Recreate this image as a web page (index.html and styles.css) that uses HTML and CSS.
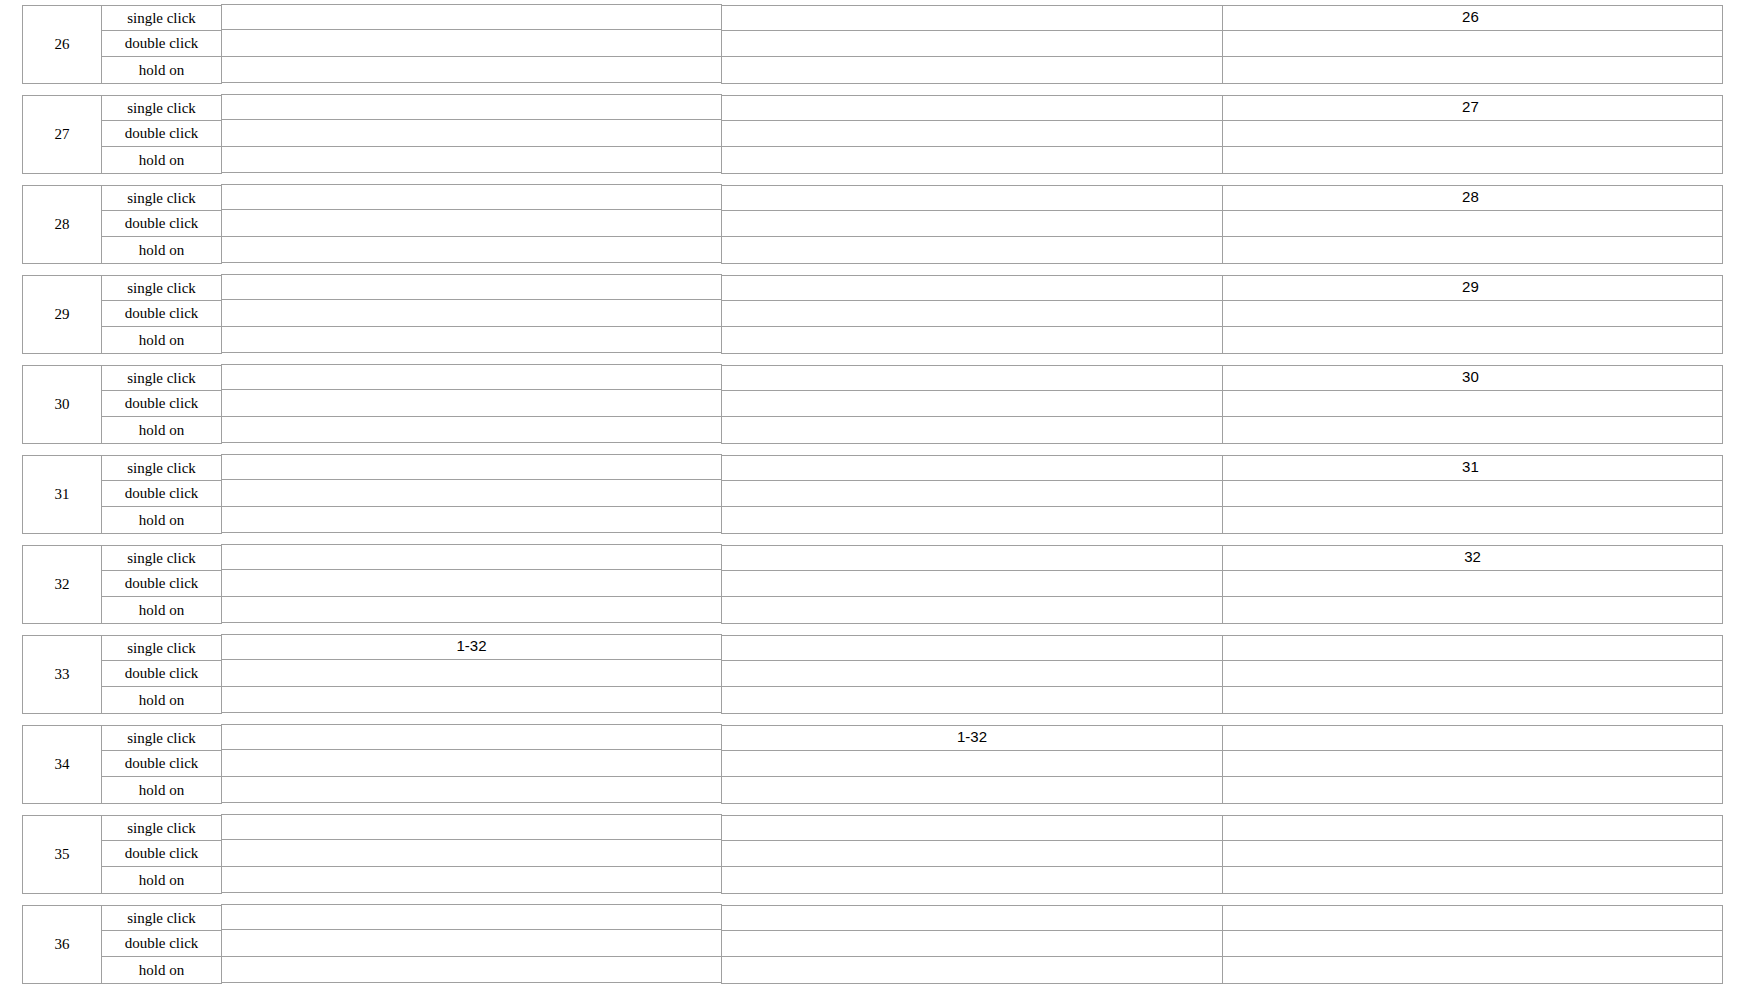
FILE: index.html
```html
<!doctype html>
<html>

<head>
    <title>Button mapping</title>
    <link rel="stylesheet" href="styles.css">
</head>

<body>
    <div class="Sheet">
        <div class="Block">
            <div class="Keys">
                <div class="Num">26</div>
                <div class="Act">single click</div>
                <div class="Act">double click</div>
                <div class="Act">hold on</div>
            </div>
            <div class="Vals Vals-first"><div class="Cell"></div><div class="Cell"></div><div class="Cell"></div></div>
            <div class="Vals Vals-mid"><div class="Cell"></div><div class="Cell"></div><div class="Cell"></div></div>
            <div class="Vals"><div class="Cell">26&nbsp;</div><div class="Cell"></div><div class="Cell"></div></div>
        </div>
        <div class="Block">
            <div class="Keys">
                <div class="Num">27</div>
                <div class="Act">single click</div>
                <div class="Act">double click</div>
                <div class="Act">hold on</div>
            </div>
            <div class="Vals Vals-first"><div class="Cell"></div><div class="Cell"></div><div class="Cell"></div></div>
            <div class="Vals Vals-mid"><div class="Cell"></div><div class="Cell"></div><div class="Cell"></div></div>
            <div class="Vals"><div class="Cell">27&nbsp;</div><div class="Cell"></div><div class="Cell"></div></div>
        </div>
        <div class="Block">
            <div class="Keys">
                <div class="Num">28</div>
                <div class="Act">single click</div>
                <div class="Act">double click</div>
                <div class="Act">hold on</div>
            </div>
            <div class="Vals Vals-first"><div class="Cell"></div><div class="Cell"></div><div class="Cell"></div></div>
            <div class="Vals Vals-mid"><div class="Cell"></div><div class="Cell"></div><div class="Cell"></div></div>
            <div class="Vals"><div class="Cell">28&nbsp;</div><div class="Cell"></div><div class="Cell"></div></div>
        </div>
        <div class="Block">
            <div class="Keys">
                <div class="Num">29</div>
                <div class="Act">single click</div>
                <div class="Act">double click</div>
                <div class="Act">hold on</div>
            </div>
            <div class="Vals Vals-first"><div class="Cell"></div><div class="Cell"></div><div class="Cell"></div></div>
            <div class="Vals Vals-mid"><div class="Cell"></div><div class="Cell"></div><div class="Cell"></div></div>
            <div class="Vals"><div class="Cell">29&nbsp;</div><div class="Cell"></div><div class="Cell"></div></div>
        </div>
        <div class="Block">
            <div class="Keys">
                <div class="Num">30</div>
                <div class="Act">single click</div>
                <div class="Act">double click</div>
                <div class="Act">hold on</div>
            </div>
            <div class="Vals Vals-first"><div class="Cell"></div><div class="Cell"></div><div class="Cell"></div></div>
            <div class="Vals Vals-mid"><div class="Cell"></div><div class="Cell"></div><div class="Cell"></div></div>
            <div class="Vals"><div class="Cell">30&nbsp;</div><div class="Cell"></div><div class="Cell"></div></div>
        </div>
        <div class="Block">
            <div class="Keys">
                <div class="Num">31</div>
                <div class="Act">single click</div>
                <div class="Act">double click</div>
                <div class="Act">hold on</div>
            </div>
            <div class="Vals Vals-first"><div class="Cell"></div><div class="Cell"></div><div class="Cell"></div></div>
            <div class="Vals Vals-mid"><div class="Cell"></div><div class="Cell"></div><div class="Cell"></div></div>
            <div class="Vals"><div class="Cell">31&nbsp;</div><div class="Cell"></div><div class="Cell"></div></div>
        </div>
        <div class="Block">
            <div class="Keys">
                <div class="Num">32</div>
                <div class="Act">single click</div>
                <div class="Act">double click</div>
                <div class="Act">hold on</div>
            </div>
            <div class="Vals Vals-first"><div class="Cell"></div><div class="Cell"></div><div class="Cell"></div></div>
            <div class="Vals Vals-mid"><div class="Cell"></div><div class="Cell"></div><div class="Cell"></div></div>
            <div class="Vals"><div class="Cell">32</div><div class="Cell"></div><div class="Cell"></div></div>
        </div>
        <div class="Block">
            <div class="Keys">
                <div class="Num">33</div>
                <div class="Act">single click</div>
                <div class="Act">double click</div>
                <div class="Act">hold on</div>
            </div>
            <div class="Vals Vals-first"><div class="Cell">1-32</div><div class="Cell"></div><div class="Cell"></div></div>
            <div class="Vals Vals-mid"><div class="Cell"></div><div class="Cell"></div><div class="Cell"></div></div>
            <div class="Vals"><div class="Cell"></div><div class="Cell"></div><div class="Cell"></div></div>
        </div>
        <div class="Block">
            <div class="Keys">
                <div class="Num">34</div>
                <div class="Act">single click</div>
                <div class="Act">double click</div>
                <div class="Act">hold on</div>
            </div>
            <div class="Vals Vals-first"><div class="Cell"></div><div class="Cell"></div><div class="Cell"></div></div>
            <div class="Vals Vals-mid"><div class="Cell">1-32</div><div class="Cell"></div><div class="Cell"></div></div>
            <div class="Vals"><div class="Cell"></div><div class="Cell"></div><div class="Cell"></div></div>
        </div>
        <div class="Block">
            <div class="Keys">
                <div class="Num">35</div>
                <div class="Act">single click</div>
                <div class="Act">double click</div>
                <div class="Act">hold on</div>
            </div>
            <div class="Vals Vals-first"><div class="Cell"></div><div class="Cell"></div><div class="Cell"></div></div>
            <div class="Vals Vals-mid"><div class="Cell"></div><div class="Cell"></div><div class="Cell"></div></div>
            <div class="Vals"><div class="Cell"></div><div class="Cell"></div><div class="Cell"></div></div>
        </div>
        <div class="Block">
            <div class="Keys">
                <div class="Num">36</div>
                <div class="Act">single click</div>
                <div class="Act">double click</div>
                <div class="Act">hold on</div>
            </div>
            <div class="Vals Vals-first"><div class="Cell"></div><div class="Cell"></div><div class="Cell"></div></div>
            <div class="Vals Vals-mid"><div class="Cell"></div><div class="Cell"></div><div class="Cell"></div></div>
            <div class="Vals"><div class="Cell"></div><div class="Cell"></div><div class="Cell"></div></div>
        </div>
    </div>
</body>

</html>
```

FILE: styles.css
```css
html,
body {
    background-color: #fff;
    margin: 0;
}

.Sheet {
    padding: 5px 0 0 22px;
}

.Block {
    display: flex;
    align-items: flex-start;
    margin-bottom: 11px;
}

.Keys {
    display: grid;
    grid-template-columns: 79px 119px;
    grid-template-rows: 24px 26px 27px;
    width: 200px;
    box-sizing: border-box;
    border: 1px solid #a0a0a0;
    font-family: "Liberation Serif", "Times New Roman", serif;
    font-size: 15px;
    color: #000;
}

.Num {
    grid-row: 1 / span 3;
    border-right: 1px solid #a0a0a0;
    display: flex;
    align-items: center;
    justify-content: center;
}

.Act {
    display: flex;
    align-items: center;
    justify-content: center;
}

.Act+.Act {
    border-top: 1px solid #a0a0a0;
}

.Vals {
    display: grid;
    grid-template-rows: 24px 26px 27px;
    width: 501px;
    box-sizing: border-box;
    margin-left: -1px;
    border: 1px solid #a0a0a0;
    font-family: "Liberation Sans", Arial, sans-serif;
    font-size: 15px;
    color: #000;
}

/* the first value table sits one pixel higher, as in the original */
.Vals-first {
    margin-top: -1px;
    grid-template-rows: 24px 27px 26px;
}

.Vals-mid {
    width: 502px;
}

.Cell {
    display: flex;
    align-items: center;
    justify-content: center;
    padding-bottom: 3px;
    white-space: pre;
}

.Cell+.Cell {
    border-top: 1px solid #a0a0a0;
}
```
